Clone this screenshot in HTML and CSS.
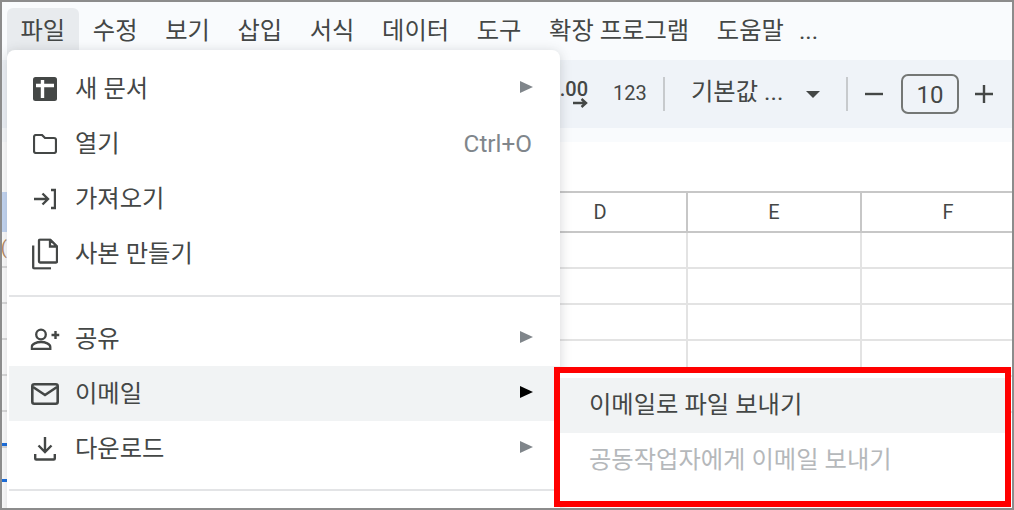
FILE: index.html
```html
<!DOCTYPE html>
<html lang="ko">
<head>
    <meta charset="UTF-8">
    <title>파일 메뉴</title>
    <link rel="stylesheet" href="styles.css">
</head>
<body>
    <div class="window">
        <nav class="menubar">
            <span class="menubar-item active">파일</span>
            <span class="menubar-item">수정</span>
            <span class="menubar-item">보기</span>
            <span class="menubar-item">삽입</span>
            <span class="menubar-item">서식</span>
            <span class="menubar-item">데이터</span>
            <span class="menubar-item">도구</span>
            <span class="menubar-item">확장 프로그램</span>
            <span class="menubar-item">도움말</span>
            <span class="menubar-item more">...</span>
        </nav>

        <div class="toolbar">
            <span class="decimal">.00
                <svg width="15" height="10" viewBox="0 0 15 10"><path d="M0 5h13M8.500 1l4.500 4-4.500 4" fill="none" stroke="#444746" stroke-width="2.400"/></svg>
            </span>
            <span class="format-num">123</span>
            <span class="tool-sep"></span>
            <span class="font-name">기본값 ...</span>
            <svg class="caret" width="14" height="7" viewBox="0 0 14 7"><path d="M0 0h14L7 7z" fill="#444746"/></svg>
            <span class="tool-sep second"></span>
            <svg class="step" width="18" height="18" viewBox="0 0 18 18"><path d="M0 9h18" stroke="#444746" stroke-width="2.400"/></svg>
            <span class="size-box">10</span>
            <svg class="step plus" width="18" height="18" viewBox="0 0 18 18"><path d="M0 9h18M9 0v18" stroke="#444746" stroke-width="2.400"/></svg>
        </div>
        <div class="toolbar-gap"></div>
        <div class="formula-bar"></div>

        <div class="grid">
            <div class="cell head">D</div><div class="cell head">E</div><div class="cell head">F</div>
            <div class="cell"></div><div class="cell"></div><div class="cell"></div>
            <div class="cell"></div><div class="cell"></div><div class="cell"></div>
            <div class="cell"></div><div class="cell"></div><div class="cell"></div>
            <div class="cell"></div><div class="cell"></div><div class="cell"></div>
            <div class="cell"></div><div class="cell"></div><div class="cell"></div>
        </div>

        <!-- what is left of the sheet's row headers beside the open menu -->
        <div class="row-strip">
            <div class="strip-head"></div>
            <div class="strip-row"><span class="strip-text">(</span></div>
            <div class="strip-row"></div>
            <div class="strip-row"></div>
            <div class="strip-row"></div>
            <div class="strip-row"></div>
            <div class="strip-row"><span class="strip-mark"></span></div>
            <div class="strip-row short"><span class="strip-mark"></span></div>
        </div>

        <div class="file-menu">
            <div class="menu-row">
                <svg class="menu-icon" width="24" height="24" viewBox="0 0 24 24"><rect width="24" height="24" rx="2.500" fill="#444746"/><path d="M3 8.500h18M9.500 3v18" stroke="#fff" stroke-width="3.400" fill="none"/></svg>
                <span class="menu-label">새 문서</span>
                <span class="arrow"></span>
            </div>
            <div class="menu-row">
                <svg class="menu-icon" width="24" height="20" viewBox="0 0 24 20"><path d="M1 3a2 2 0 0 1 2-2h6l3 3h9a2 2 0 0 1 2 2v11a2 2 0 0 1-2 2H3a2 2 0 0 1-2-2z" fill="none" stroke="#444746" stroke-width="2.200"/></svg>
                <span class="menu-label">열기</span>
                <span class="shortcut">Ctrl+O</span>
            </div>
            <div class="menu-row">
                <svg class="menu-icon" width="22" height="22" viewBox="0 0 22 22"><path d="M0 11h14M8.500 5.500l5.500 5.500-5.500 5.500M17 2h4v18h-4" fill="none" stroke="#444746" stroke-width="2.400"/></svg>
                <span class="menu-label">가져오기</span>
            </div>
            <div class="menu-row">
                <svg class="menu-icon" width="26" height="31" viewBox="0 0 26 31"><path d="M8 1h10l7 7v15a1 1 0 0 1-1 1H8a1 1 0 0 1-1-1V2a1 1 0 0 1 1-1zM18 1v7h7M1.200 7v22a1 1 0 0 0 1 1H19" fill="none" stroke="#444746" stroke-width="2.300"/></svg>
                <span class="menu-label">사본 만들기</span>
            </div>
            <div class="menu-sep"></div>
            <div class="menu-row">
                <svg class="menu-icon" width="29" height="22" viewBox="0 0 29 22"><circle cx="10.500" cy="6.500" r="4.800" fill="none" stroke="#444746" stroke-width="2.300"/><path d="M1.200 20.800v-1.800c0-3 5-5 9.300-5s9.300 2 9.300 5v1.800z" fill="none" stroke="#444746" stroke-width="2.300"/><path d="M21 7h8M25 3v8" stroke="#444746" stroke-width="2.400"/></svg>
                <span class="menu-label">공유</span>
                <span class="arrow"></span>
            </div>
            <div class="menu-row hovered">
                <svg class="menu-icon" width="28" height="22" viewBox="0 0 28 22"><rect x="1.300" y="1.300" width="25.400" height="19.400" rx="2" fill="none" stroke="#444746" stroke-width="2.600"/><path d="M2 4l12 8 12-8" fill="none" stroke="#444746" stroke-width="2.600"/></svg>
                <span class="menu-label">이메일</span>
                <span class="arrow dark"></span>
            </div>
            <div class="menu-row">
                <svg class="menu-icon" width="22" height="24" viewBox="0 0 22 24"><path d="M11 0v15M4.500 8.500L11 15l6.500-6.500M1.200 17v4.500a1 1 0 0 0 1 1h17.600a1 1 0 0 0 1-1V17" fill="none" stroke="#444746" stroke-width="2.400"/></svg>
                <span class="menu-label">다운로드</span>
                <span class="arrow"></span>
            </div>
            <div class="menu-sep last"></div>
        </div>

        <div class="email-menu">
            <div class="email-row hovered">이메일로 파일 보내기</div>
            <div class="email-row disabled">공동작업자에게 이메일 보내기</div>
        </div>
    </div>
</body>
</html>
```

FILE: styles.css
```css
* {
    box-sizing: border-box;
}
body {
    margin: 0;
    font-family: Roboto, "Noto Sans CJK KR", sans-serif;
    color: #444746;
}
.window {
    position: relative;
    width: 1014px;
    height: 510px;
    overflow: hidden;
    background: #fff;
    border: 2px solid #8c8c8c;
}

/* menu bar */
.menubar {
    display: flex;
    align-items: center;
    height: 58px;
    padding-left: 5px;
    background: #f9fbfd;
}
.menubar-item {
    padding: 0 14.100px 0 13.500px;
    font-size: 24.300px;
    line-height: 46px;
    height: 48px;
    margin-top: 2px;
    white-space: nowrap;
}
.menubar-item.active {
    background: #e8ebee;
    border-radius: 6px 6px 0 0;
}
.menubar-item.more {
    padding-left: 1px;
}

/* toolbar */
.toolbar {
    display: flex;
    align-items: center;
    height: 68px;
    padding-left: 556px;
    background: #eff3f8;
}
.decimal {
    position: relative;
    width: 30px;
    font-size: 20px;
    font-weight: 500;
    line-height: 20px;
    margin-top: -10px;
    text-align: right;
}
.decimal svg {
    position: absolute;
    left: 15px;
    top: 19px;
}
.format-num {
    width: 32px;
    margin-left: 25px;
    margin-bottom: 2px;
    font-size: 20px;
    text-align: center;
}
.tool-sep {
    width: 2px;
    height: 34px;
    margin-left: 18px;
    background: #c7cacd;
}
.tool-sep.second {
    margin-left: 17px;
}
.font-name {
    margin-left: 26px;
    font-size: 24.300px;
    line-height: 30px;
    padding-bottom: 4px;
    width: 115px;
    white-space: nowrap;
}
.caret {
    margin-right: 9px;
}
.step {
    margin-left: 17px;
}
.size-box {
    margin-left: 18px;
    width: 58px;
    height: 40px;
    border: 2px solid #747775;
    border-radius: 7px;
    font-size: 24px;
    line-height: 38px;
    text-align: center;
}
.step.plus {
    margin-left: 16px;
}
.toolbar-gap {
    height: 14px;
    background: #f9fbfd;
}
.formula-bar {
    height: 49px;
    background: #fff;
}

/* sheet */
.grid {
    display: grid;
    grid-template-columns: 174px 174px 174px;
    grid-template-rows: 40px;
    grid-auto-rows: 36px;
    margin-left: 512px;
    border-top: 2px solid #c7c7c7;
}
.cell {
    border-right: 2px solid #e3e3e3;
    border-bottom: 2px solid #e3e3e3;
}
.cell.head {
    border-right-color: #c7c7c7;
    border-bottom-color: #c7c7c7;
    font-size: 20px;
    line-height: 38px;
    text-align: center;
}
.row-strip {
    position: absolute;
    left: 0;
    top: 190px;
    width: 5px;
}
.strip-head {
    height: 40px;
    background: #c5d8f5;
}
.strip-row {
    position: relative;
    height: 36px;
    border-bottom: 2px solid #dcdcdc;
}
.strip-row.short {
    height: 34px;
    border-bottom: 0;
}
.strip-text {
    position: absolute;
    right: 0;
    top: 4px;
    font-size: 18px;
    line-height: 24px;
    color: #b58a62;
}
.strip-mark {
    position: absolute;
    left: 0;
    bottom: 0;
    width: 5px;
    height: 3px;
    background: #1a6fe0;
}

/* file menu */
.file-menu {
    position: absolute;
    left: 5px;
    top: 48px;
    width: 553px;
    height: 470px;
    padding-top: 11px;
    background: #fff;
    border-radius: 8px;
    box-shadow: 0 2px 12px rgba(60, 64, 67, 0.22);
}
.menu-row {
    display: flex;
    align-items: center;
    height: 55px;
    padding: 0 27px 0 23px;
    position: relative;
    font-size: 24.300px;
}
.menu-row.hovered {
    margin-left: 2px;
    padding-left: 21px;
    background: #f1f3f4;
}
.menu-icon {
    position: absolute;
    left: 38px;
    top: 50%;
    transform: translate(-50%, -50%);
}
.menu-row.hovered .menu-icon {
    left: 36px;
}
.menu-label {
    margin-left: 45px;
    margin-bottom: 5px;
}
.shortcut {
    margin-left: auto;
    margin-right: 1px;
    color: #80868b;
}
.arrow {
    margin-left: auto;
    margin-bottom: 3px;
    width: 0;
    height: 0;
    border-left: 13px solid #80868b;
    border-top: 6px solid transparent;
    border-bottom: 6px solid transparent;
}
.arrow.dark {
    border-left-color: #000;
}
.menu-sep {
    height: 2px;
    margin: 14px 0 14px 2px;
    background: #e3e4e6;
}
.menu-sep.last {
    margin: 13px 0 0 2px;
}

/* email submenu with the red highlight box */
.email-menu {
    position: absolute;
    left: 552px;
    top: 365px;
    width: 457px;
    height: 140px;
    padding-top: 5px;
    background: #fff;
    border: 6px solid #f00;
}
.email-row {
    height: 55px;
    padding-left: 29px;
    font-size: 24.300px;
    line-height: 54px;
}
.email-row.hovered {
    background: #f1f3f4;
}
.email-row.disabled {
    color: #b5b8bb;
}
```
